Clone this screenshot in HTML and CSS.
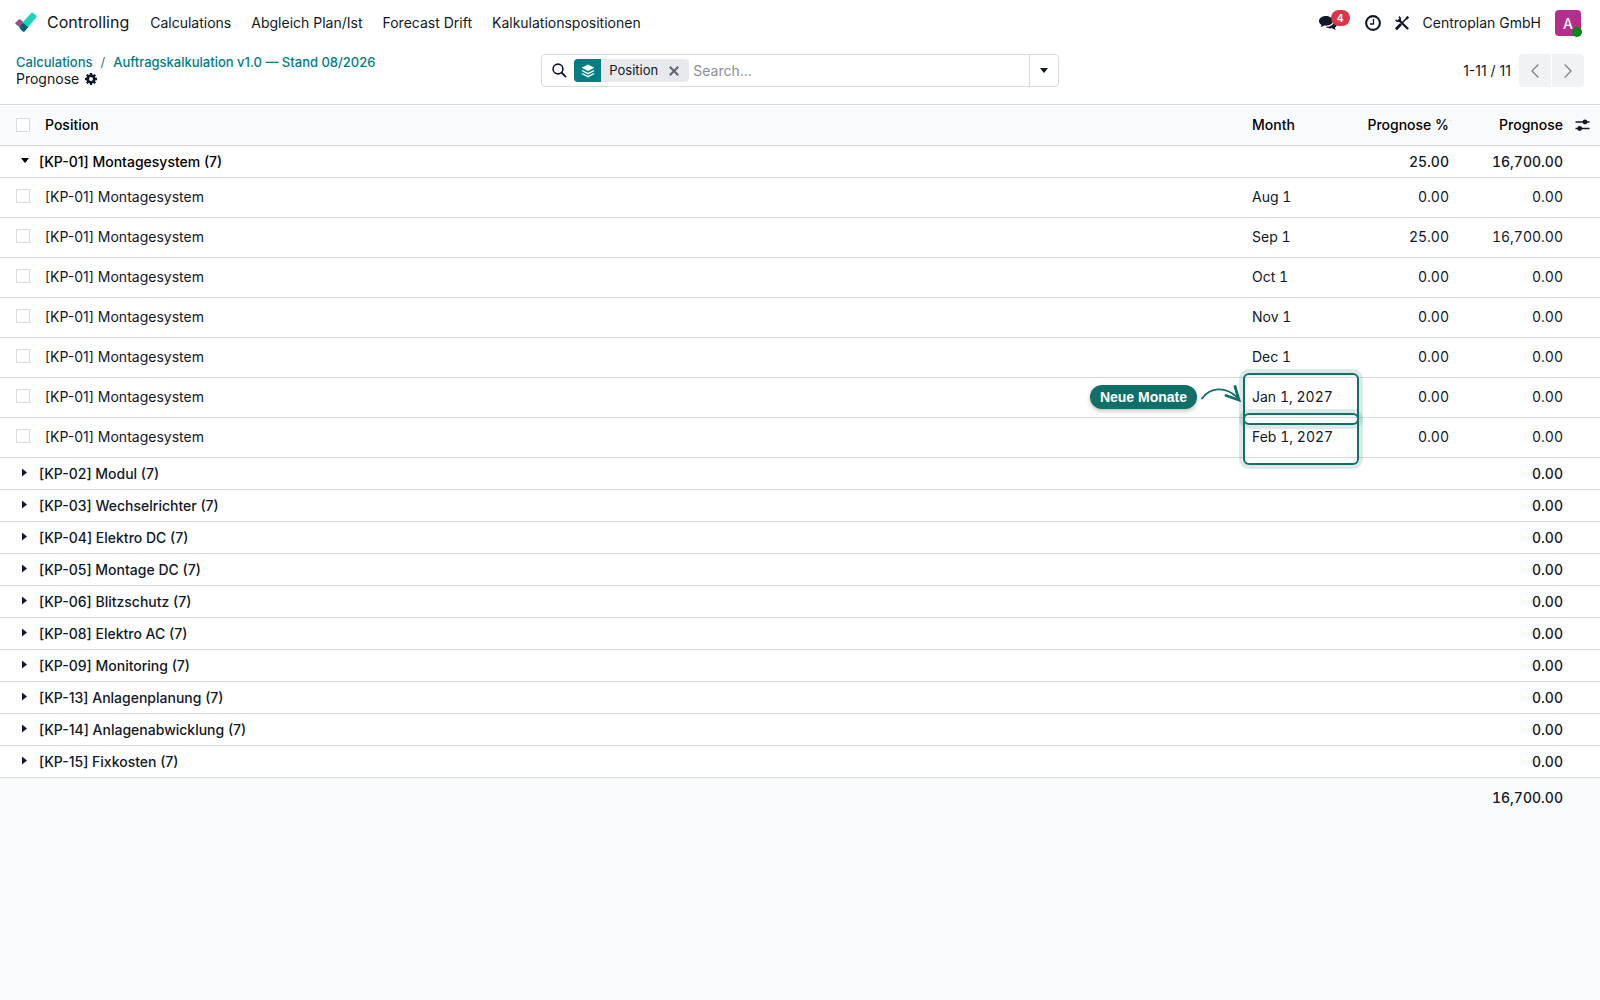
FILE: index.html
```
<!DOCTYPE html>
<html lang="de">
<head>
  <meta charset="UTF-8">
  <meta name="viewport" content="width=device-width, initial-scale=1.0">
  <title>Prognose - Controlling</title>
  <link rel="stylesheet" href="styles.css">
</head>
<body>
  <header class="navbar">
    <a href="#" class="brand">
      <svg width="24" height="22" viewBox="0 0 24 22" aria-hidden="true">
        <path d="M1.600 10.400 L4.800 7.400 Q5.600 6.800 6.400 7.600 L11 11.500 L7 16.600 L1.500 12 Q.8 11.200 1.600 10.400Z" fill="#985184"/>
        <path d="M17.300.9 Q18.200.1 19.200.9 L22 3.400 Q23 4.400 22.200 5.400 L13.500 16 L7.500 11.500Z" fill="#1ad3bb"/>
        <path d="M8.800 10.800 Q9.600 11.800 10.600 12 L14.200 15.300 L10.800 19.300 Q9.800 20.300 8.800 19.400 L5.800 16.600 Q5.200 15.800 6 14.700Z" fill="#005e7a"/>
      </svg>
      <span>Controlling</span>
    </a>
    <nav class="menu">
      <a href="#">Calculations</a>
      <a href="#">Abgleich Plan/Ist</a>
      <a href="#">Forecast Drift</a>
      <a href="#">Kalkulationspositionen</a>
    </nav>
    <div class="systray">
      <button class="icon-button messages" aria-label="Messages">
        <svg width="18" height="16" viewBox="0 0 18 16" fill="currentColor" aria-hidden="true">
          <path d="M7 1C3.100 1 0 3.200 0 6c0 1.600 1 3 2.600 3.900-.2.800-.7 1.500-1.300 2.100 1.600-.1 2.900-.7 4-1.400.5.1 1.100.1 1.700.1 3.900 0 7-2.100 7-4.700S10.900 1 7 1z"/>
          <path d="M15.200 5c.2 3.900-3 6.900-8.500 7 1.200.9 2.900 1.400 4.700 1.400.6 0 1.100 0 1.600-.1 1.100.8 2.500 1.300 4 1.400-.6-.6-1-1.200-1.200-2 1.300-.8 2.200-2 2.200-3.500C18 7.500 17 6 15.200 5z"/>
        </svg>
        <span class="counter">4</span>
      </button>
      <button class="icon-button" aria-label="Activities">
        <svg width="16" height="16" viewBox="0 0 16 16" fill="none" stroke="currentColor" aria-hidden="true">
          <circle cx="8" cy="8" r="6.900" stroke-width="2.100"/>
          <path d="M8.500 4v5H5" stroke-width="1.300"/>
        </svg>
      </button>
      <button class="icon-button" aria-label="Tools">
        <svg width="14" height="14" viewBox="0 0 14 14" fill="none" stroke="currentColor" aria-hidden="true">
          <path d="M12 2L7.500 6.600" stroke-width="1.500"/>
          <path d="M13.300.7L11.200 2.800" stroke-width="2.400"/>
          <path d="M5.300 8.700L1.700 12.400" stroke-width="2.800" stroke-linecap="round"/>
          <path d="M4 4l8.500 8.500" stroke-width="2.200" stroke-linecap="round"/>
          <path d="M3.800.8a2.300 2.300 0 1 1-3 3" stroke-width="1.700"/>
        </svg>
      </button>
      <a href="#" class="company">Centroplan GmbH</a>
      <button class="avatar" aria-label="User menu">A<span class="status"></span></button>
    </div>
  </header>

  <section class="control-panel">
    <div class="breadcrumbs">
      <div class="crumbs">
        <a href="#">Calculations</a>
        <span>/</span>
        <a href="#">Auftragskalkulation v1.0 — Stand 08/2026</a>
      </div>
      <div class="current">
        Prognose
        <button class="icon-button" aria-label="Actions">
          <svg width="12" height="12" viewBox="0 0 12 12" aria-hidden="true">
            <circle cx="6" cy="6" r="3.300" fill="none" stroke="currentColor" stroke-width="2.700"/>
            <path d="M6 0v2.200M6 9.800V12M0 6h2.200M9.800 6H12M1.750 1.750l1.600 1.600M8.650 8.650l1.600 1.600M1.750 10.250l1.600-1.600M8.650 3.350l1.600-1.600" stroke="currentColor" stroke-width="2.300"/>
          </svg>
        </button>
      </div>
    </div>

    <div class="search">
      <svg class="search-icon" width="15" height="15" viewBox="0 0 15 15" fill="none" stroke="currentColor" aria-hidden="true">
        <circle cx="6" cy="6" r="4.900" stroke-width="1.600"/>
        <path d="M9.500 9.500l4.600 4.600" stroke-width="1.800"/>
      </svg>
      <div class="facet">
        <span class="facet-icon">
          <svg width="14" height="14" viewBox="0 0 14 14" aria-hidden="true">
            <path d="M7 .5l6.300 3.300L7 7.100.7 3.800z" fill="#fff"/>
            <path d="M.9 6.500L7 9.700l6.100-3.200M.9 9.500L7 12.700l6.100-3.200" fill="none" stroke="#fff" stroke-width="1.300"/>
          </svg>
        </span>
        <span class="facet-label">Position</span>
        <button class="facet-remove" aria-label="Remove">
          <svg width="10" height="10" viewBox="0 0 10 10" fill="none" stroke="currentColor" stroke-width="2" aria-hidden="true">
            <path d="M.8.8l8.400 8.400M9.200.8L.8 9.200"/>
          </svg>
        </button>
      </div>
      <input type="text" placeholder="Search..." aria-label="Search">
      <button class="search-toggle" aria-label="Search options">
        <svg width="8" height="5" viewBox="0 0 8 5" fill="currentColor" aria-hidden="true"><path d="M0 0h8L4 5z"/></svg>
      </button>
    </div>

    <div class="pager">
      <span>1-11 / 11</span>
      <div class="pager-buttons">
        <button aria-label="Previous">
          <svg width="8" height="14" viewBox="0 0 8 14" fill="none" stroke="currentColor" stroke-width="1.300" aria-hidden="true"><path d="M7.300.5L1 7l6.300 6.500"/></svg>
        </button>
        <button aria-label="Next">
          <svg width="8" height="14" viewBox="0 0 8 14" fill="none" stroke="currentColor" stroke-width="1.300" aria-hidden="true"><path d="M.7.5L7 7 .7 13.500"/></svg>
        </button>
      </div>
    </div>
  </section>

  <table class="list">
    <colgroup>
      <col class="col-select">
      <col>
      <col class="col-month">
      <col class="col-percent">
      <col class="col-amount">
      <col class="col-options">
    </colgroup>
    <thead>
      <tr>
        <th class="select"><input type="checkbox" aria-label="Select all"></th>
        <th>Position</th>
        <th>Month</th>
        <th class="number">Prognose %</th>
        <th class="number">Prognose</th>
        <th class="options">
          <button class="icon-button" aria-label="Optional columns">
            <svg width="15" height="12" viewBox="0 0 15 12" aria-hidden="true">
              <path d="M.5 3h14M.5 9.500h14" stroke="currentColor" stroke-width="1.300"/>
              <circle cx="10" cy="3" r="2.400" fill="currentColor"/>
              <circle cx="4.700" cy="9.500" r="2.400" fill="currentColor"/>
            </svg>
          </button>
        </th>
      </tr>
    </thead>
    <tbody>
      <tr class="group open">
        <td colspan="3"><button class="group-name">[KP-01] Montagesystem (7)</button></td>
        <td class="number">25.00</td>
        <td class="number">16,700.00</td>
        <td></td>
      </tr>
      <tr>
        <td class="select"><input type="checkbox" aria-label="Select Aug 1"></td>
        <td>[KP-01] Montagesystem</td>
        <td class="month">Aug 1</td>
        <td class="number">0.00</td>
        <td class="number">0.00</td>
        <td></td>
      </tr>
      <tr>
        <td class="select"><input type="checkbox" aria-label="Select Sep 1"></td>
        <td>[KP-01] Montagesystem</td>
        <td class="month">Sep 1</td>
        <td class="number">25.00</td>
        <td class="number">16,700.00</td>
        <td></td>
      </tr>
      <tr>
        <td class="select"><input type="checkbox" aria-label="Select Oct 1"></td>
        <td>[KP-01] Montagesystem</td>
        <td class="month">Oct 1</td>
        <td class="number">0.00</td>
        <td class="number">0.00</td>
        <td></td>
      </tr>
      <tr>
        <td class="select"><input type="checkbox" aria-label="Select Nov 1"></td>
        <td>[KP-01] Montagesystem</td>
        <td class="month">Nov 1</td>
        <td class="number">0.00</td>
        <td class="number">0.00</td>
        <td></td>
      </tr>
      <tr>
        <td class="select"><input type="checkbox" aria-label="Select Dec 1"></td>
        <td>[KP-01] Montagesystem</td>
        <td class="month">Dec 1</td>
        <td class="number">0.00</td>
        <td class="number">0.00</td>
        <td></td>
      </tr>
      <tr>
        <td class="select"><input type="checkbox" aria-label="Select Jan 1, 2027"></td>
        <td>[KP-01] Montagesystem</td>
        <td class="month marked">
          Jan 1, 2027
          <div class="callout">
            <span class="callout-label">Neue Monate</span>
            <svg width="42" height="20" viewBox="0 0 42 20" fill="none" stroke="#0f6f69" stroke-linecap="round" aria-hidden="true">
              <path d="M2 13.500C10 2 25 1 37 12" stroke-width="1.800"/>
              <path d="M35 1.500L39 15L26 10.500" stroke-width="2.800"/>
            </svg>
          </div>
        </td>
        <td class="number">0.00</td>
        <td class="number">0.00</td>
        <td></td>
      </tr>
      <tr>
        <td class="select"><input type="checkbox" aria-label="Select Feb 1, 2027"></td>
        <td>[KP-01] Montagesystem</td>
        <td class="month marked">Feb 1, 2027</td>
        <td class="number">0.00</td>
        <td class="number">0.00</td>
        <td></td>
      </tr>
      <tr class="group">
        <td colspan="3"><button class="group-name">[KP-02] Modul (7)</button></td>
        <td></td>
        <td class="number">0.00</td>
        <td></td>
      </tr>
      <tr class="group">
        <td colspan="3"><button class="group-name">[KP-03] Wechselrichter (7)</button></td>
        <td></td>
        <td class="number">0.00</td>
        <td></td>
      </tr>
      <tr class="group">
        <td colspan="3"><button class="group-name">[KP-04] Elektro DC (7)</button></td>
        <td></td>
        <td class="number">0.00</td>
        <td></td>
      </tr>
      <tr class="group">
        <td colspan="3"><button class="group-name">[KP-05] Montage DC (7)</button></td>
        <td></td>
        <td class="number">0.00</td>
        <td></td>
      </tr>
      <tr class="group">
        <td colspan="3"><button class="group-name">[KP-06] Blitzschutz (7)</button></td>
        <td></td>
        <td class="number">0.00</td>
        <td></td>
      </tr>
      <tr class="group">
        <td colspan="3"><button class="group-name">[KP-08] Elektro AC (7)</button></td>
        <td></td>
        <td class="number">0.00</td>
        <td></td>
      </tr>
      <tr class="group">
        <td colspan="3"><button class="group-name">[KP-09] Monitoring (7)</button></td>
        <td></td>
        <td class="number">0.00</td>
        <td></td>
      </tr>
      <tr class="group">
        <td colspan="3"><button class="group-name">[KP-13] Anlagenplanung (7)</button></td>
        <td></td>
        <td class="number">0.00</td>
        <td></td>
      </tr>
      <tr class="group">
        <td colspan="3"><button class="group-name">[KP-14] Anlagenabwicklung (7)</button></td>
        <td></td>
        <td class="number">0.00</td>
        <td></td>
      </tr>
      <tr class="group">
        <td colspan="3"><button class="group-name">[KP-15] Fixkosten (7)</button></td>
        <td></td>
        <td class="number">0.00</td>
        <td></td>
      </tr>
    </tbody>
    <tfoot>
      <tr>
        <td colspan="4"></td>
        <td class="number">16,700.00</td>
        <td></td>
      </tr>
    </tfoot>
  </table>
</body>
</html>
```
FILE: styles.css
```
* {
  box-sizing: border-box;
}

body {
  margin: 0;
  background-color: #f9fafb;
  color: #111827;
  font-family: Inter, sans-serif;
  font-size: 14px;
  line-height: 21px;
}

a {
  color: inherit;
  text-decoration: none;
}

button {
  padding: 0;
  border: none;
  background: none;
  color: inherit;
  font: inherit;
  cursor: pointer;
}

svg {
  display: block;
  flex: none;
}

.icon-button {
  display: flex;
  align-items: center;
}

/* Navbar */
.navbar {
  display: flex;
  align-items: center;
  height: 46px;
  padding: 0 19px 0 14px;
  background-color: #fff;
}

.brand {
  display: flex;
  align-items: center;
  gap: 9px;
  font-size: 16px;
}

.menu {
  display: flex;
  gap: 20px;
  margin-left: 21px;
}

.brand span,
.menu a,
.company {
  padding-bottom: 2px;
}

.systray {
  display: flex;
  align-items: center;
  gap: 14px;
  margin-left: auto;
}

.messages {
  position: relative;
  margin-right: 14px;
}

.counter {
  position: absolute;
  left: 12px;
  top: -5px;
  width: 19px;
  border-radius: 8px;
  background-color: #dc3545;
  color: #fff;
  font-size: 10px;
  font-weight: 700;
  line-height: 16px;
  text-align: center;
}

.avatar {
  position: relative;
  width: 26px;
  height: 26px;
  border-radius: 4px;
  background-color: #b52e8c;
  color: #fff;
  font-weight: 500;
}

.status {
  position: absolute;
  right: -1px;
  bottom: -1px;
  width: 10px;
  height: 10px;
  border-radius: 50%;
  background-color: #008818;
}

/* Control panel */
.control-panel {
  display: grid;
  grid-template-columns: repeat(3, minmax(0, 1fr));
  gap: 8px;
  align-items: start;
  padding: 8px 16px 17px;
  border-bottom: 1px solid #d8dadd;
  background-color: #fff;
}

.crumbs {
  display: flex;
  gap: 8px;
  font-size: 13px;
  line-height: 17px;
  color: #5f636f;
  white-space: nowrap;
}

.crumbs a {
  color: #017e84;
  font-weight: 500;
}

.current {
  display: flex;
  align-items: center;
  gap: 6px;
  line-height: 16px;
}

.search {
  display: flex;
  align-items: center;
  height: 33px;
  border: 1px solid #d8dadd;
  border-radius: 4px;
}

.search-icon {
  margin: 0 7px 0 10px;
}

.facet {
  display: flex;
  align-items: center;
  height: 23px;
  border-radius: 4px;
  background-color: #e7e9ed;
  overflow: hidden;
}

.facet-icon {
  display: flex;
  align-items: center;
  justify-content: center;
  width: 27px;
  height: 100%;
  background-color: #017e84;
}

.facet-label {
  padding: 0 11px 0 8px;
  font-size: 13px;
}

.facet-remove {
  padding-right: 10px;
  color: #5f636f;
}

.search input {
  flex: 1;
  min-width: 0;
  padding: 0 4px;
  border: none;
  outline: none;
  background: none;
  color: inherit;
  font: inherit;
}

.search input::placeholder {
  color: #8b8e97;
}

.search-toggle {
  display: flex;
  align-items: center;
  justify-content: center;
  align-self: stretch;
  width: 29px;
  border-left: 1px solid #d8dadd;
}

.pager {
  display: flex;
  align-items: center;
  justify-content: flex-end;
  gap: 8px;
}

.pager-buttons {
  display: flex;
  gap: 1px;
  border-radius: 4px;
  overflow: hidden;
}

.pager-buttons button {
  display: flex;
  align-items: center;
  justify-content: center;
  width: 32px;
  height: 33px;
  background-color: #f1f2f4;
  color: #808389;
}

/* List */
.list {
  width: 100%;
  table-layout: fixed;
  border-collapse: separate;
  border-spacing: 0;
}

.col-select {
  width: 41px;
}

.col-month {
  width: 106px;
}

.col-percent {
  width: 99px;
}

.col-amount {
  width: 114px;
}

.col-options {
  width: 33px;
}

.list th,
.list td {
  height: 40px;
  padding: 0 4px 2px;
  border-bottom: 1px solid #d8dadd;
  text-align: left;
}

.list th {
  height: 41px;
  color: #000;
  font-weight: 500;
}

.list tbody {
  background-color: #fff;
}

.list .select {
  padding-left: 16px;
}

.list .number {
  text-align: right;
}

.list .number,
.list .month {
  font-variant-numeric: tabular-nums;
}

.list .options {
  padding-left: 8px;
  color: #111827;
}

.list input {
  display: block;
  appearance: none;
  width: 14px;
  height: 14px;
  margin: 0;
  border: 1px solid #d8dadd;
  background-color: #fff;
}

.list thead .select,
.list thead .options {
  padding-bottom: 0;
}

.list tbody .select {
  padding-bottom: 3px;
}

.list .group td {
  height: 32px;
  padding-bottom: 0;
  font-weight: 500;
}

.group-name {
  display: flex;
  align-items: center;
}

.group-name::before {
  content: "";
  width: 5px;
  height: 8px;
  margin: 0 12px 2px 18px;
  background-color: currentColor;
  clip-path: polygon(0 0, 100% 50%, 0 100%);
}

.group.open .group-name {
  color: #000;
}

.group.open .group-name::before {
  width: 8px;
  height: 5px;
  margin: 0 10px 2px 17px;
  clip-path: polygon(0 0, 100% 0, 50% 100%);
}

.list tfoot td {
  border-bottom: none;
  font-weight: 500;
}

/* Highlighted months */
.marked {
  position: relative;
}

.marked::after {
  content: "";
  position: absolute;
  inset: -5px -5px -8px;
  border: 2px solid #0f6f69;
  border-radius: 6px;
  box-shadow: 0 0 0 4px rgba(15, 111, 105, 0.15);
  pointer-events: none;
}

.callout {
  position: absolute;
  right: 100%;
  top: 2px;
  display: flex;
  align-items: center;
  gap: 3px;
  margin-right: 6px;
}

.callout-label {
  margin-top: 5px;
  padding: 0 10px;
  border-radius: 12px;
  background-color: #0f6f69;
  box-shadow: 0 2px 4px rgba(0, 0, 0, 0.25);
  color: #fff;
  font-family: "Liberation Sans", sans-serif;
  font-weight: 700;
  line-height: 24px;
  white-space: nowrap;
}
```
